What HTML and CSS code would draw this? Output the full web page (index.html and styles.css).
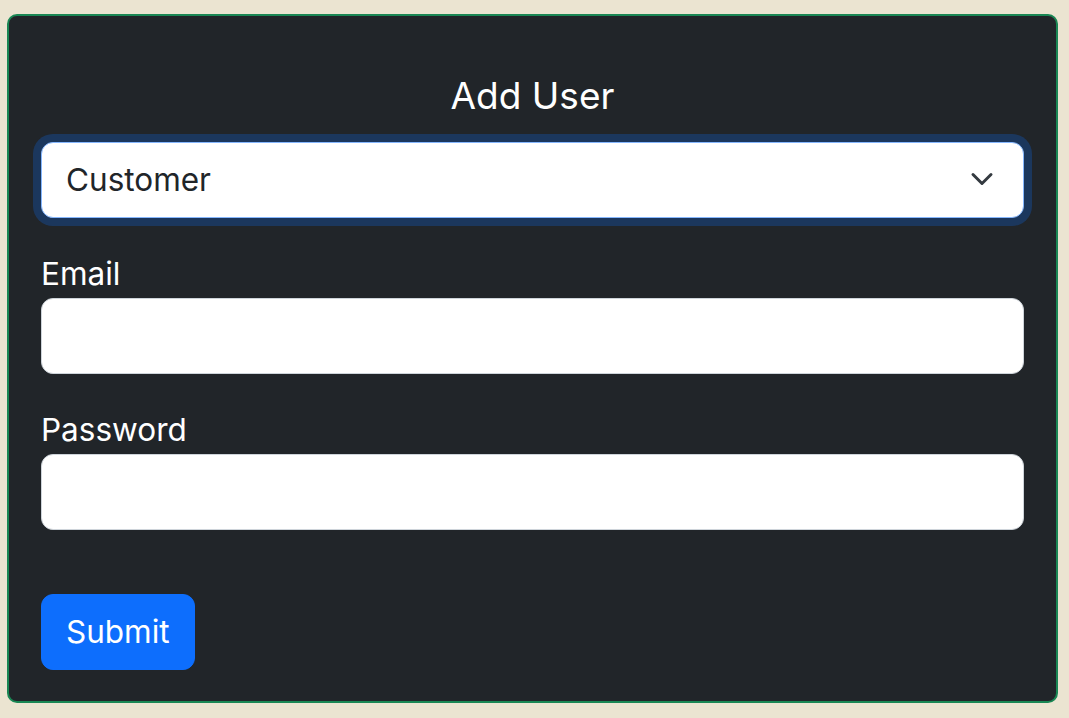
FILE: index.html
```html
<!DOCTYPE html>
<html lang="en">
<head>
<meta charset="utf-8">
<title>Add User</title>
<link rel="stylesheet" href="styles.css">
</head>
<body>
<main class="card">
  <h5 class="card-title">Add User</h5>
  <form class="form">
    <div class="select-wrap">
      <select class="form-select">
        <option>Customer</option>
        <option>Admin</option>
      </select>
      <svg class="chevron" width="24" height="24" viewBox="0 0 16 16" aria-hidden="true">
        <path d="M2 5l6 6 6-6" fill="none" stroke="#343a40" stroke-width="2" stroke-linecap="round" stroke-linejoin="round"/>
      </svg>
    </div>
    <div class="field">
      <label class="form-label" for="email">Email</label>
      <input class="form-control" id="email" type="email">
    </div>
    <div class="field">
      <label class="form-label" for="password">Password</label>
      <input class="form-control" id="password" type="password">
    </div>
    <button class="btn-primary" type="submit">Submit</button>
  </form>
</main>
</body>
</html>
```
FILE: styles.css
```css
* { box-sizing: border-box; }
html, body { margin: 0; padding: 0; }
body {
  background: #ebe4d1;
  font-family: "Inter", "Liberation Sans", sans-serif;
  padding: 14px 11px 15px 7px;
  height: 718px;
}
.card {
  height: 689px;
  background: #212529;
  border: 2px solid #198754;
  border-radius: 10px;
  padding: 56px 32px 31px 32px;
  display: flex;
  flex-direction: column;
}
.card-title {
  margin: 0 0 22px 0;
  font-size: 37px;
  font-weight: 400;
  line-height: 48px;
  color: #fff;
  text-align: center;
}
.form {
  display: flex;
  flex-direction: column;
}
.select-wrap {
  position: relative;
}
.form-select {
  appearance: none;
  -webkit-appearance: none;
  display: block;
  width: 100%;
  height: 76px;
  margin: 0;
  padding: 12px 72px 12px 24px;
  font-family: inherit;
  font-size: 31.5px;
  line-height: 48px;
  color: #212529;
  background: #fff;
  border: 1px solid #86b7fe;
  border-radius: 12px;
  box-shadow: 0 0 0 8px rgba(13, 110, 253, 0.25);
  outline: none;
}
.chevron {
  position: absolute;
  right: 30px;
  top: 25px;
}
.field {
  display: flex;
  flex-direction: column;
  margin-top: 32px;
}
.form-label {
  font-size: 31.5px;
  line-height: 48px;
  color: #fff;
}
.form-control {
  display: block;
  width: 100%;
  height: 76px;
  margin: 0;
  padding: 12px 24px;
  font-family: inherit;
  font-size: 31.5px;
  background: #fff;
  border: 1px solid #ced4da;
  border-radius: 12px;
  outline: none;
}
.btn-primary {
  align-self: flex-start;
  margin-top: 64px;
  height: 76px;
  padding: 12px 24px;
  font-family: inherit;
  font-size: 31.5px;
  line-height: 48px;
  color: #fff;
  background: #0d6efd;
  border: 1px solid #0d6efd;
  border-radius: 12px;
}
```
